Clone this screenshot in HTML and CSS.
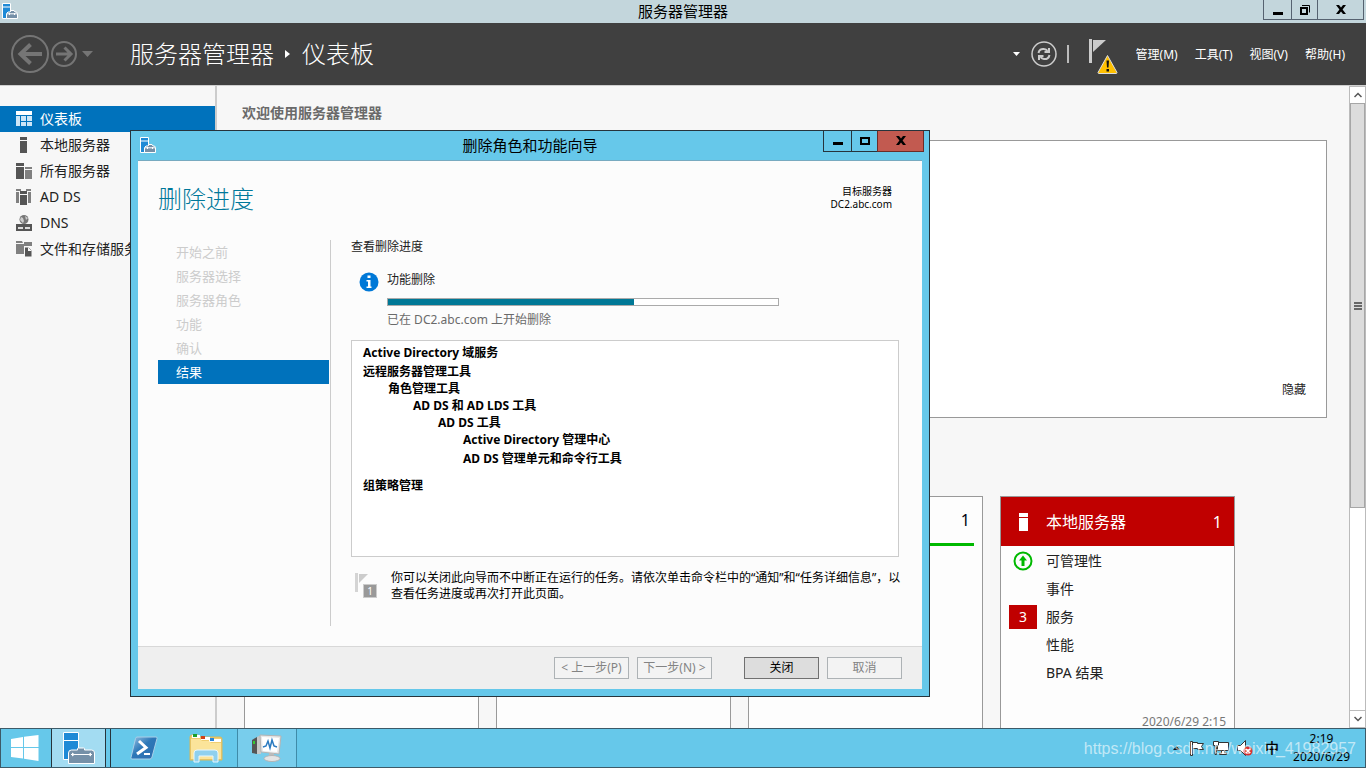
FILE: index.html
```html
<!DOCTYPE html>
<html lang="zh-CN">
<head>
<meta charset="utf-8">
<title>服务器管理器</title>
<link rel="stylesheet" href="styles.css">
</head>
<body>
<svg class="defs" aria-hidden="true">
  <symbol id="toolbox" viewBox="0 0 16 16">
    <path d="M0.500 0.500h8v15h-8z" fill="#1e8ad6" stroke="#fff"/>
    <path d="M0.500 4h8" stroke="#fff"/>
    <path d="M4.500 15.500v-5l1.500-1.500h2l1-1.500h3l1 1.500h1.500l1 1.500v5z" fill="#7590a8" stroke="#fff"/>
    <path d="M5 10.800h10M7.500 10v2M12.500 10v2" stroke="#fff" fill="none"/>
  </symbol>
</svg>

<header class="titlebar">
  <svg class="app-icon" width="16" height="16"><use href="#toolbox"/></svg>
  <span class="titlebar-text">服务器管理器</span>
  <div class="win-buttons">
    <button class="win-btn min" aria-label="最小化"><svg width="12" height="12"><path d="M1 8h10v3H1z"/></svg></button>
    <button class="win-btn max" aria-label="还原"><svg width="12" height="12"><path d="M2 4h6v6H2z" fill="none" stroke="#000" stroke-width="2"/><path d="M3 1.500h7.500v7" fill="none" stroke="#000"/></svg></button>
    <button class="win-btn close" aria-label="关闭"><svg width="12" height="12"><path d="M1 1h3l2 2.500L8 1h3L7.600 5.500 11 10H8L6 7.500 4 10H1l3.400-4.500z"/></svg></button>
  </div>
</header>

<div class="command-bar">
  <nav class="history">
    <button class="nav-btn" aria-label="后退"><svg width="40" height="40" viewBox="0 0 40 40" fill="none" stroke="#757575"><circle cx="20" cy="20" r="18" stroke-width="2"/><path d="M10 20h22M20.500 10.500L10.500 20l10 9.500" stroke-width="4"/></svg></button>
    <button class="nav-btn" aria-label="前进"><svg width="28" height="28" viewBox="0 0 28 28" fill="none" stroke="#757575"><circle cx="14" cy="14" r="12" stroke-width="2"/><path d="M6 14h15M14.500 7.500L21 14l-6.500 6.500" stroke-width="3"/></svg></button>
    <button class="nav-btn drop" aria-label="历史记录"><svg width="12" height="7"><path d="M0 0h11L5.500 6z" fill="#757575"/></svg></button>
  </nav>
  <h1 class="crumbs"><span>服务器管理器</span><svg width="6" height="8"><path d="M0 0l5 4-5 4z" fill="#fff"/></svg><span>仪表板</span></h1>
  <div class="tools">
    <button class="nav-btn" aria-label="列表"><svg width="8" height="4"><path d="M0 0h7L3.500 4z" fill="#fff"/></svg></button>
    <button class="nav-btn" aria-label="刷新"><svg width="26" height="26" viewBox="0 0 26 26" fill="none" stroke="#ccc"><circle cx="13" cy="13" r="12" stroke-width="1.500"/><path d="M7.500 12c.5-3 3-4.500 5.500-4 1.500.2 2.500.8 3.500 2M18.500 14c-.5 3-3 4.500-5.500 4-1.500-.2-2.500-.8-3.500-2" stroke-width="2"/><path d="M18 7v4h-4.500M8 19v-4h4.500" stroke-width="2"/></svg></button>
    <span class="divider"></span>
    <button class="nav-btn alerts" aria-label="通知"><svg width="30" height="36" viewBox="0 0 30 36"><path d="M1 0h3v24H1z" fill="#ccc"/><path d="M5 1h13L5 13z" fill="#ccc"/><path d="M19.500 16.500L29 33.500q0 1-1 1H11q-1 0-1-1z" fill="#ffc000" stroke="#ddd" stroke-linejoin="round"/><path d="M18.500 21.500h2.500l-.5 7h-1.500zM18.500 30h2.500v2.500h-2.500z" fill="#111"/></svg></button>
    <nav class="menu">
      <button>管理(M)</button>
      <button>工具(T)</button>
      <button>视图(V)</button>
      <button>帮助(H)</button>
    </nav>
  </div>
</div>

<div class="workspace">
  <nav class="sidebar">
    <a href="#" class="side-item active"><svg width="16" height="16" fill="#cde6f7"><path d="M0 0h16v4H0z" fill="#fff"/><path d="M0 5h4v10H0zM5 5h5v5H5zM11 5h5v5h-5zM5 11h5v4H5zM11 11h5v4h-5z"/></svg>仪表板</a>
    <a href="#" class="side-item"><svg width="16" height="16" fill="#555"><path d="M4 0h7v3H4zM4 4h7v12H4z"/></svg>本地服务器</a>
    <a href="#" class="side-item"><svg width="16" height="16" fill="#555"><path d="M0 0h8v3H0zM0 4h8v12H0z"/><path d="M9 4h7v2H9zM9 7h7v9H9z" fill="#808080"/></svg>所有服务器</a>
    <a href="#" class="side-item"><svg width="16" height="16" fill="#555"><path d="M0 0h5v2H0zM0 3h3v11H0zM10 0h5v2h-5zM12 3h3v11h-3z" fill="#808080"/><path d="M4 2h7v3H4zM4 6h7v10H4z"/></svg>AD DS</a>
    <a href="#" class="side-item"><svg width="16" height="16" fill="#555"><circle cx="8" cy="4.500" r="4.500" fill="#777"/><path d="M5 2l2 1 1 3-1 2-3-3zM9 1l3 2-2 2z" fill="#ccc"/><path d="M0 9h16v7H0z"/><path d="M2 12h5v2H2zM9 12h5v2H9z" fill="#ddd"/></svg>DNS</a>
    <a href="#" class="side-item"><svg width="16" height="16" fill="#808080"><path d="M0 0h6l1 2H0zM0 3h8v10H0zM8 1h8v4H8z"/><path d="M8.500 6h4.500l3 3v7H8.500z" fill="#555" stroke="#f7f7f7"/><path d="M12 6v4h4z" fill="#f7f7f7"/></svg>文件和存储服务</a>
  </nav>

  <main class="content">
    <h2 class="welcome">欢迎使用服务器管理器</h2>
    <section class="welcome-box"><a href="#">隐藏</a></section>
    <section class="tiles">
      <article class="tile"></article>
      <article class="tile"></article>
      <article class="tile ok"><div class="tile-head"><span class="count">1</span></div></article>
      <article class="tile alert">
        <div class="tile-head"><svg width="9" height="18" fill="#fff"><path d="M0 0h9v4H0zM0 5h9v13H0z"/></svg><h3>本地服务器</h3><span class="count">1</span></div>
        <ul class="tile-list">
          <li><span class="mark"><svg width="20" height="20"><circle cx="10" cy="10" r="8.500" fill="none" stroke="#00b900" stroke-width="2"/><path d="M10 4.500l4 5h-2.500v5.500h-3V9.500H6z" fill="#00b900"/></svg></span>可管理性</li>
          <li><span class="mark"></span>事件</li>
          <li><span class="mark red">3</span>服务</li>
          <li><span class="mark"></span>性能</li>
          <li><span class="mark"></span>BPA 结果</li>
        </ul>
        <time class="stamp">2020/6/29 2:15</time>
      </article>
    </section>
  </main>

  <div class="scrollbar">
    <button aria-label="向上滚动"><svg width="8" height="6"><path d="M0.500 5L4 1.500 7.500 5" fill="none" stroke="#555" stroke-width="1.500"/></svg></button>
    <div class="thumb"><svg width="8" height="8"><path d="M0 0h8v2H0zM0 3h8v2H0zM0 6h8v2H0z" fill="#666"/></svg></div>
    <div class="track"></div>
    <button aria-label="向下滚动"><svg width="8" height="6"><path d="M0.500 1L4 4.500 7.500 1" fill="none" stroke="#555" stroke-width="1.500"/></svg></button>
  </div>
</div>

<section class="dialog" role="dialog" aria-labelledby="dlg-title">
  <header class="dialog-bar">
    <svg class="app-icon" width="16" height="16"><use href="#toolbox"/></svg>
    <span id="dlg-title">删除角色和功能向导</span>
    <div class="win-buttons">
      <button class="win-btn min" aria-label="最小化"><svg width="12" height="12"><path d="M1 7h10v3H1z"/></svg></button>
      <button class="win-btn max" aria-label="最大化"><svg width="12" height="12"><path d="M2 3h8v6H2z" fill="none" stroke="#000" stroke-width="2"/></svg></button>
      <button class="win-btn close" aria-label="关闭"><svg width="12" height="12"><path d="M1 1h3l2 2.500L8 1h3L7.600 5.500 11 10H8L6 7.500 4 10H1l3.400-4.500z"/></svg></button>
    </div>
  </header>
  <div class="dialog-client">
    <div class="dialog-head">
      <h2>删除进度</h2>
      <p>目标服务器<br>DC2.abc.com</p>
    </div>
    <div class="dialog-body">
      <ol class="steps">
        <li>开始之前</li>
        <li>服务器选择</li>
        <li>服务器角色</li>
        <li>功能</li>
        <li>确认</li>
        <li class="current">结果</li>
      </ol>
      <div class="pane">
        <p class="pane-title">查看删除进度</p>
        <div class="status">
          <svg width="20" height="20"><circle cx="10" cy="10" r="9.500" fill="#0078d7"/><path d="M8.500 3.500h3v2.500h-3zM7.500 8h4v6.500h1V16h-5v-1.500h1.500V9.500H7.500z" fill="#fff"/></svg>
          <div class="status-main">
            <label for="prog">功能删除</label>
            <progress id="prog" max="100" value="63"></progress>
            <p>已在 DC2.abc.com 上开始删除</p>
          </div>
        </div>
        <ul class="features">
          <li>Active Directory 域服务</li>
          <li class="spaced">远程服务器管理工具
            <ul><li>角色管理工具
              <ul><li>AD DS 和 AD LDS 工具
                <ul><li>AD DS 工具
                  <ul><li>Active Directory 管理中心</li><li class="spaced">AD DS 管理单元和命令行工具</li></ul>
                </li></ul>
              </li></ul>
            </li></ul>
          </li>
          <li class="apart">组策略管理</li>
        </ul>
        <div class="note">
          <span class="flag"><svg width="14" height="20"><path d="M0 0h3v19H0z" fill="#d4d4d4"/><path d="M4 1h9L4 10z" fill="#ccc"/></svg><b>1</b></span>
          <p>你可以关闭此向导而不中断正在运行的任务。请依次单击命令栏中的“通知”和“任务详细信息”，以<br>查看任务进度或再次打开此页面。</p>
        </div>
      </div>
    </div>
    <footer class="dialog-foot">
      <button disabled>&lt; 上一步(P)</button>
      <button disabled>下一步(N) &gt;</button>
      <button class="primary">关闭</button>
      <button disabled>取消</button>
    </footer>
  </div>
</section>

<footer class="taskbar">
  <button class="task start" aria-label="开始"><svg width="28" height="26"><path d="M0 4l12-2v10H0zM13 1.800L27.500 0v12H13zM0 13h12v10.500L0 22zM13 13h14.500v13L13 23.800z" fill="#fff"/></svg></button>
  <button class="task manager" aria-label="服务器管理器"><svg width="32" height="32"><path d="M0.500 0.500h15v8h-15zM0.500 8.500h15v19h-15z" fill="#1e8ad6" stroke="#fff"/><path d="M5.500 31.500V21q0-3 3-3h6v-1.500q0-.5 1-.5h5q1 0 1 .5V18h7q3 0 3 3v10.500z" fill="#7590a8" stroke="#fff"/><path d="M8 22.500h21" stroke="#fff"/><path d="M9 20.500l3 2-3 2zM28 20.500l-3 2 3 2z" fill="#fff"/></svg></button>
  <button class="task" aria-label="PowerShell"><svg width="28" height="24"><defs><linearGradient id="ps" x1="0" y1="0" x2="1" y2="1"><stop offset="0" stop-color="#9cc4e4"/><stop offset=".45" stop-color="#2d78b8"/><stop offset="1" stop-color="#2f6cae"/></linearGradient></defs><path d="M7 1h19q1.500 0 1 1.500L22 21q-.5 2-2 2H2q-1.500 0-1-1.500L5.500 2.500Q6 1 7 1z" fill="url(#ps)" stroke="#a9cfe8"/><path d="M9 5l7 6.500-9 6.500" fill="none" stroke="#fff" stroke-width="3"/><path d="M14 18h6" stroke="#fff" stroke-width="2"/></svg></button>
  <button class="task" aria-label="文件资源管理器"><svg width="34" height="30"><path d="M1 4q0-2 2-2h6l2 2h20q2 0 2 2v21H1z" fill="#f0ce70" stroke="#d9b95a"/><path d="M3 2h8v3H3zM12 4h9v3h-9zM20 6h12v3H20z" fill="#fff"/><path d="M2 6h9l2 2h7l2 2h10v16H2z" fill="#fbe49a"/><path d="M4 1h4v3H4z" fill="#18a030"/><path d="M12 3h4v3h-4z" fill="#d04018"/><path d="M21 5h4v3h-4z" fill="#2a86d8"/><path d="M5 29V20q0-3 3-3h18q3 0 3 3v9h-5v-6H10v6z" fill="#8fd0ee" stroke="#e6f6fd"/></svg></button>
  <button class="task running" aria-label="性能监视器"><svg width="32" height="30"><path d="M1 7l5-3v17l-5-1z" fill="#555"/><path d="M6 4l4-2v19H6z" fill="#c8c8c8"/><path d="M9 2l21 1-2 18-18-2z" fill="#e8e8e8" stroke="#b4b4b4"/><path d="M11 4l17 1-2 14-14-1z" fill="#fff"/><path d="M12 14l3-1 2-5 2 7 2-8 2 6 3 1" fill="none" stroke="#2a7ac0" stroke-width="1.500"/><path d="M18 20h5v4h-5z" fill="#bbb"/><ellipse cx="21" cy="25.500" rx="8" ry="3" fill="#e4e4e4" stroke="#b4b4b4"/><path d="M2 8h2v3H2z" fill="#3c3"/></svg></button>
  <div class="tray">
    <svg width="8" height="4"><path d="M0 4h7L3.500 0z" fill="#111"/></svg>
    <svg width="16" height="16" fill="#fff" stroke="#333"><path d="M1.500 1.500h2v14h-2zM3.500 2.500h5v1h6l-2 3 2 3h-6v-1h-5z"/></svg>
    <svg width="16" height="16" fill="#fff" stroke="#333"><path d="M4.500 2.500h11v8h-11zM8.500 10.500h3v2.500h2v1.500h-7v-1.500h2z"/><path d="M0.500 1.500h5v4h-2v9h-1.500v-9h-1.500z"/></svg>
    <svg width="16" height="16"><path d="M0.500 5.500h3l5-5v15l-5-5h-3z" fill="#fff" stroke="#333"/><circle cx="11" cy="11" r="4.500" fill="#d83030"/><path d="M9 9l4 4M13 9l-4 4" stroke="#fff" stroke-width="1.500"/></svg>
    <span class="ime">中</span>
    <div class="clock">2:19<br>2020/6/29</div>
  </div>
  <span class="watermark">https://blog.csdn.net/weixin_41982957</span>
</footer>
</body>
</html>
```
FILE: styles.css
```css
* { box-sizing: border-box; }

body {
  margin: 0;
  height: 100vh;
  display: flex;
  flex-direction: column;
  overflow: hidden;
  position: relative;
  background: #f7f7f7;
  color: #222;
  font-family: "Noto Sans", "Noto Sans CJK SC", sans-serif;
  font-size: 12px;
  line-height: 16px;
}

h1, h2, h3, p, ul, ol { margin: 0; padding: 0; font-weight: 400; }
ul, ol { list-style: none; }
button { font: inherit; color: inherit; margin: 0; padding: 0; border: 0; background: none; }
a { color: inherit; text-decoration: none; }
svg { display: block; flex: none; }
.defs { position: absolute; width: 0; height: 0; }

/* Main window title */
.titlebar {
  display: grid;
  grid-template-columns: 1fr auto 1fr;
  flex: none;
  height: 23px;
  background: #c3d6dc;
  color: #000;
  font-size: 15px;
  line-height: 22px;
}
.app-icon { margin: 3px 0 0 2px; }
.win-buttons { display: flex; justify-self: end; height: 20px; margin-right: 2px; }
.win-btn {
  display: flex;
  align-items: center;
  justify-content: center;
  border: 1px solid #566270;
  border-top: 0;
  border-right: 0;
}
.win-btn.min { width: 28px; }
.win-btn.max { width: 26px; }
.win-btn.close { width: 47px; border-right: 1px solid #566270; }

/* Command bar */
.command-bar {
  display: flex;
  align-items: center;
  flex: none;
  height: 62px;
  padding: 0 21px 0 10px;
  background: #404040;
  color: #fff;
}
.history { display: flex; align-items: center; width: 120px; }
.nav-btn.drop { margin-left: 4px; }
.crumbs { display: flex; align-items: center; gap: 11px; font-size: 24px; line-height: 32px; font-weight: 300; }
.tools { display: flex; align-items: center; gap: 10px; margin-left: auto; }
.tools .divider { width: 2px; height: 18px; background: #bbb; }
.tools .alerts { margin-left: 9px; padding-top: 6px; }
.menu { display: flex; gap: 17px; margin-left: 8px; padding-top: 2px; }

/* Workspace */
.workspace { display: flex; flex: 1; min-height: 0; border-top: 1px solid #d0d0d0; }
.sidebar {
  flex: none;
  width: 217px;
  padding-top: 20px;
  border-right: 2px solid #ccc;
  font-size: 14px;
  line-height: 26px;
}
.side-item { display: flex; align-items: center; gap: 8px; height: 26px; padding-left: 16px; white-space: nowrap; }
.side-item.active { background: #0072bc; color: #fff; }

.content { flex: 1; min-width: 0; overflow: hidden; padding: 16px 22px 0 27px; }
.welcome { color: #6a6a6a; font-size: 14px; line-height: 22px; font-weight: 700; margin-left: -2px; }
.welcome-box {
  display: flex;
  align-items: flex-end;
  justify-content: flex-end;
  height: 278px;
  margin-top: 16px;
  padding: 0 20px 19px;
  border: 1px solid #999;
  background: #fff;
}
.tiles { display: flex; gap: 17px; margin-top: 78px; }
.tile { width: 235px; height: 300px; border: 1px solid #999; background: #fdfdfd; }
.tile-head { display: flex; align-items: center; height: 49px; padding: 0 12px 0 18px; font-size: 16px; line-height: 24px; }
.tile-head h3 { font-size: 16px; margin-left: 18px; }
.tile-head .count { margin-left: auto; }
.tile.ok .tile-head { margin: 0 8px; padding-right: 4px; color: #001; border-bottom: 3px solid #00b900; }
.tile.alert .tile-head { background: #c00000; color: #fff; }
.tile-list { padding: 1px 8px 0; font-size: 14px; }
.tile-list li { display: flex; align-items: center; gap: 9px; height: 28px; }
.mark { display: flex; align-items: center; justify-content: center; width: 28px; height: 24px; }
.mark.red { background: #c00000; color: #fff; }
.stamp { display: block; margin: 27px 8px 0; color: #777; text-align: right; line-height: 16px; }

.scrollbar { display: flex; flex-direction: column; flex: none; width: 17px; border: 1px solid #bbb; background: #fff; }
.scrollbar button { display: flex; align-items: center; justify-content: center; height: 16px; flex: none; }
.thumb { display: flex; align-items: center; justify-content: center; flex: 2 0 0; border: 1px solid #a6a6a6; background: #dcdcdc; }
.track { flex: 1 0 0; border-bottom: 1px solid #bbb; }

/* Wizard window */
.dialog {
  position: absolute;
  left: 130px;
  top: 130px;
  width: 800px;
  padding: 0 7px 7px;
  border: 1px solid #26343c;
  background: #66c8ea;
  color: #222;
}
.dialog-bar {
  display: grid;
  grid-template-columns: 1fr auto 1fr;
  height: 29px;
  color: #000;
  font-size: 15px;
  line-height: 28px;
}
.dialog-bar .app-icon { margin-top: 6px; }
.dialog-bar .win-buttons { height: 21px; margin-right: -2px; }
.dialog-bar .win-btn { border-color: #26343c; }
.dialog-bar .close { background: #c25a50; border-color: #6b2c28; }
.dialog-client { background: #fcfcfc; border-top: 1px solid #78aac0; }
.dialog-head { display: flex; justify-content: space-between; height: 79px; padding: 22px 30px 0 20px; color: #000; }
.dialog-head h2 { color: #00789a; font-size: 24px; line-height: 32px; font-weight: 300; }
.dialog-head p { margin-top: 2px; font-size: 10px; line-height: 13px; text-align: right; }
.dialog-body { display: flex; height: 406px; padding: 0 20px 20px; }
.steps { flex: none; width: 173px; padding-right: 1px; border-right: 1px solid #ccc; color: #ccc; font-size: 13px; line-height: 24px; }
.steps li { padding-left: 18px; }
.steps .current { background: #0072bc; color: #fff; }
.pane { flex: 1; min-width: 0; padding-left: 20px; }
.pane-title { line-height: 14px; }
.status { display: flex; gap: 8px; margin-top: 18px; padding-left: 8px; }
.status > svg { margin-top: 0; }
.status label { display: block; }
.status p { margin-top: 6px; color: #6a6a6a; }
progress {
  display: block;
  width: 392px;
  height: 8px;
  margin-top: 10px;
  border: 1px solid #aaa;
  background: #fff;
  appearance: none;
}
progress::-webkit-progress-bar { background: #fff; }
progress::-webkit-progress-value { background: #007896; }
.features {
  width: 548px;
  height: 217px;
  margin-top: 12px;
  padding: 3px 11px;
  border: 1px solid #ccc;
  background: #fff;
  color: #000;
  font-weight: 700;
  line-height: 17px;
}
.features ul { padding-left: 25px; }
.features li { font-weight: 700; }
.features .spaced { margin-top: 2px; }
.features .apart { margin-top: 10px; }
.note { display: flex; gap: 14px; margin-top: 13px; padding-left: 4px; color: #000; white-space: nowrap; }
.flag { position: relative; flex: none; width: 22px; height: 28px; padding-top: 3px; }
.flag b {
  position: absolute;
  right: 0;
  bottom: 0;
  width: 14px;
  height: 14px;
  border: 1px solid #ccc;
  background: #999;
  color: #fff;
  font-size: 10px;
  font-weight: 400;
  line-height: 12px;
  text-align: center;
}
.dialog-foot {
  display: flex;
  justify-content: flex-end;
  gap: 8px;
  height: 43px;
  padding: 10px 20px 0;
  border-top: 1px solid #d8d8d8;
  background: #efefef;
}
.dialog-foot button { width: 75px; height: 22px; border: 1px solid #adb2b5; background: #f3f3f3; color: #838383; line-height: 20px; white-space: nowrap; }
.dialog-foot .primary { margin-left: 24px; border-color: #707070; background: #ddd; color: #000; }

/* Taskbar */
.taskbar {
  position: relative;
  display: flex;
  flex: none;
  height: 40px;
  border: 1px solid #3d5a68;
  background: #66c8ea;
  color: #000;
}
.task { display: flex; align-items: center; justify-content: center; width: 62px; }
.task.start { width: 50px; padding-right: 2px; }
.task.manager { width: 55px; border: 1px solid #26343c; border-width: 0 1px; background: #a3dcf2; box-shadow: 4px 0 #66c8ea, 5px 0 #26343c; margin-right: 7px; }
.task.running { width: 60px; border: 1px solid #3f8ba8; border-width: 0 1px; background: #78cdec; }
.tray { display: flex; align-items: center; gap: 8px; margin-left: auto; padding-right: 15px; }
.ime { font-size: 14px; font-weight: 500; margin: 0 6px 0 4px; }
.clock { line-height: 18px; text-align: center; }
.watermark {
  position: absolute;
  right: 9px;
  bottom: 8px;
  color: rgba(255, 255, 255, .6);
  font-family: "Liberation Sans", sans-serif;
  font-size: 16px;
  line-height: 20px;
}
```
